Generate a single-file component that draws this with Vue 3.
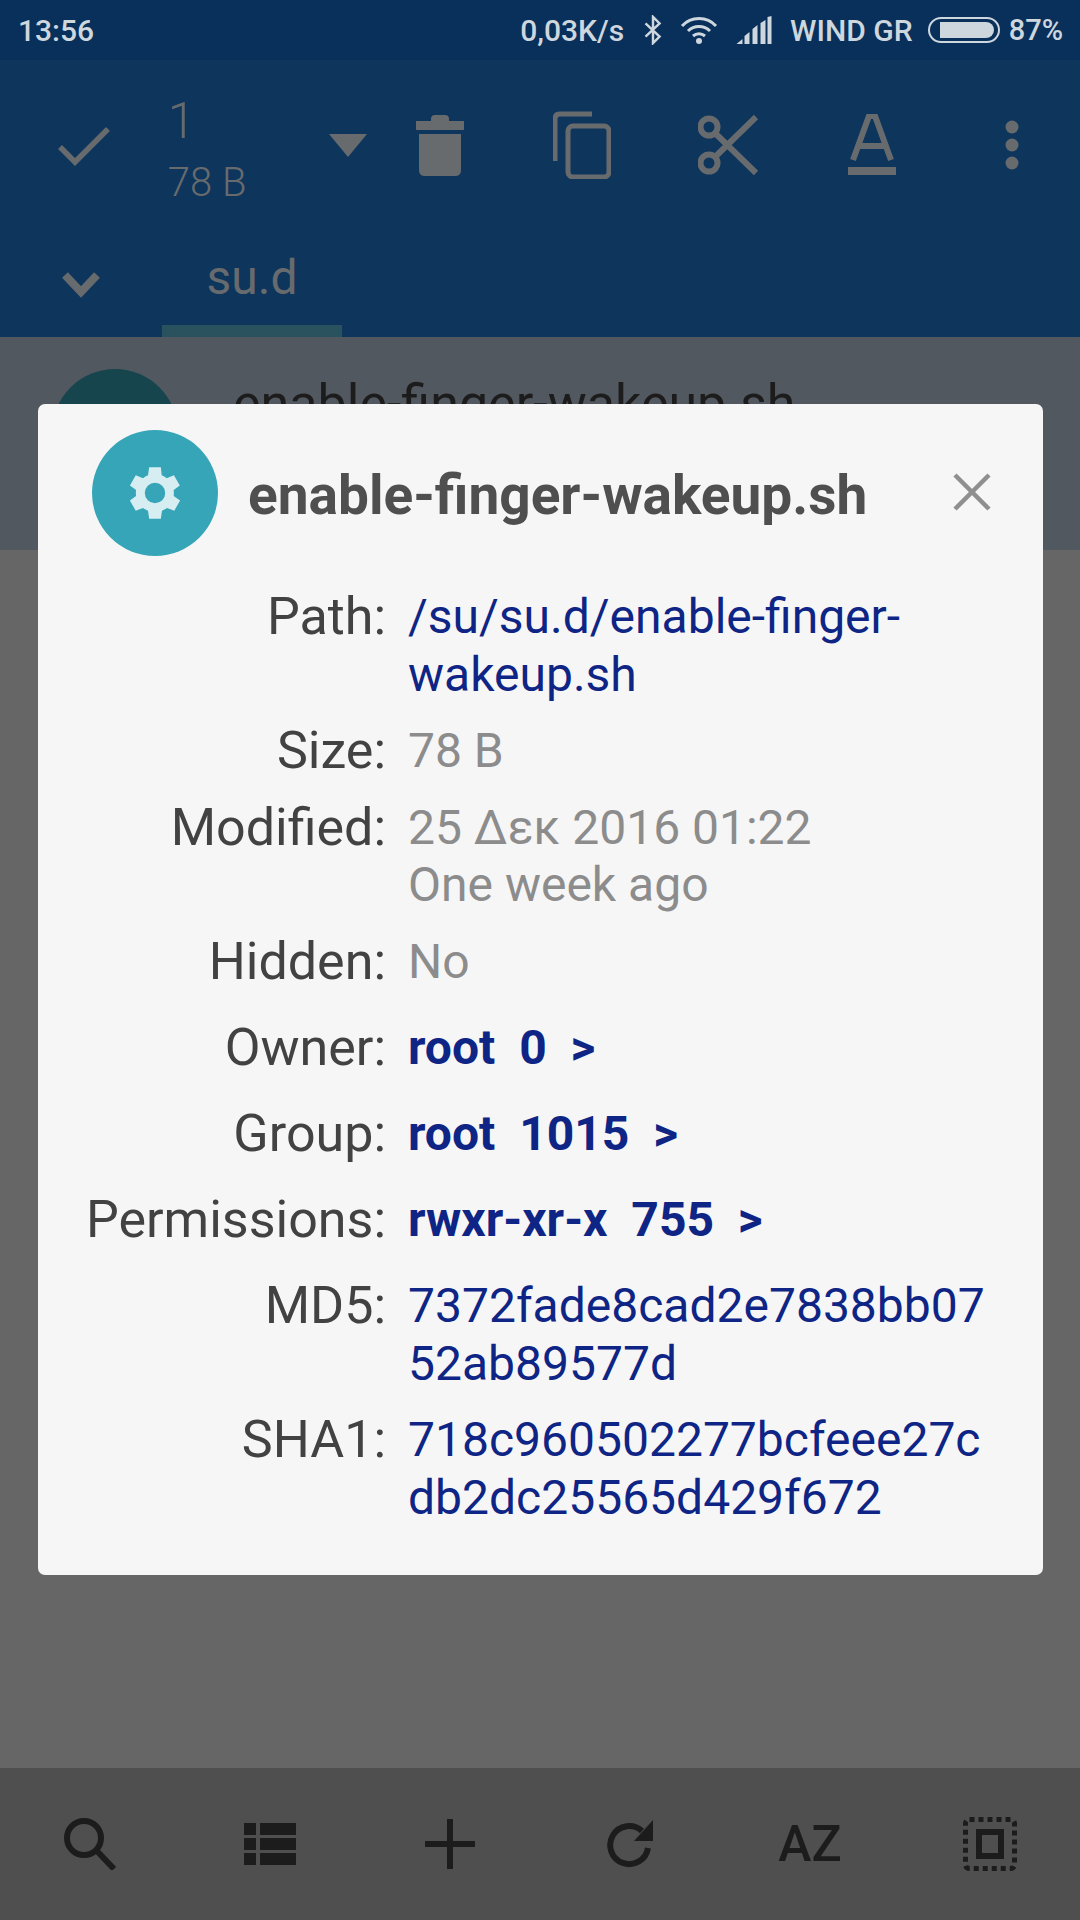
<template>
  <div class="screen">
    <!-- Status bar -->
    <div class="status">
      <span class="time">13:56</span>
      <div class="status-right">
        <span>0,03K/s</span>
        <svg class="st-bt" viewBox="0 0 20 32"><path d="M2 9l15 14-7 7V2l7 7L2 23" fill="none" stroke="#ced6de" stroke-width="2.600"/></svg>
        <svg class="st-wifi" viewBox="0 0 38 30"><path d="M2 11C11 1 27 1 36 11M8 16c6-6 16-6 22 0M13 21c3.500-3 8.500-3 12 0" fill="none" stroke="#ced6de" stroke-width="3"/><circle cx="19" cy="26" r="3" fill="#ced6de"/></svg>
        <svg class="st-sig" viewBox="0 0 36 28"><path d="M0 28l6-5v5zM8 28v-8l5-4v12zM16 28V13l5-4v19zM24 28V7l5-3v24zM31 28V1l4-1v28z" fill="#ced6de"/></svg>
        <span>WIND GR</span>
        <div class="battery"><div class="battery-fill"></div></div>
        <span class="pct">87%</span>
      </div>
    </div>

    <!-- Toolbar -->
    <div class="appbar">
      <div class="actions">
        <div class="slot-check">
          <svg width="54" height="42" viewBox="0 0 54 42"><path d="M3 22l15 15L51 4" fill="none" stroke="#686b6e" stroke-width="5.500"/></svg>
        </div>
        <div class="count">
          <div class="count-num">1</div>
          <div class="count-size">78 B</div>
        </div>
        <div class="slot-tri"><div class="tri"></div></div>
        <div class="slot">
          <svg width="48" height="62" viewBox="0 0 48 62"><path d="M15 5q0-4 4-4h10q4 0 4 4v2h15v9H0V7h15zM3 20h42v36q0 6-6 6H9q-6 0-6-6z" fill="#686b6e"/></svg>
        </div>
        <div class="slot">
          <svg width="58" height="68" viewBox="0 0 58 68"><path d="M2 50V8q0-5 5-5h32" fill="none" stroke="#686b6e" stroke-width="5"/><rect x="15" y="15" width="41" height="51" rx="5" fill="none" stroke="#686b6e" stroke-width="5"/></svg>
        </div>
        <div class="slot slot-scissors">
          <svg width="62" height="62" viewBox="0 0 62 62"><circle cx="11" cy="13" r="8.500" fill="none" stroke="#686b6e" stroke-width="6"/><circle cx="11" cy="49" r="8.500" fill="none" stroke="#686b6e" stroke-width="6"/><path d="M17 19l41 40M17 43L58 3" stroke="#686b6e" stroke-width="6" fill="none"/></svg>
        </div>
        <div class="slot slot-font">
          <svg width="48" height="62" viewBox="0 0 48 62"><path d="M5 46L21 2h6l16 44M11 32h26" fill="none" stroke="#686b6e" stroke-width="6"/><rect x="0" y="53" width="48" height="8" fill="#686b6e"/></svg>
        </div>
        <div class="slot slot-more">
          <svg width="14" height="50" viewBox="0 0 14 50"><circle cx="7" cy="7" r="6.500" fill="#686b6e"/><circle cx="7" cy="25" r="6.500" fill="#686b6e"/><circle cx="7" cy="43" r="6.500" fill="#686b6e"/></svg>
        </div>
      </div>
      <div class="tabs">
        <div class="slot-chevron">
          <svg width="40" height="28" viewBox="0 0 40 28"><path d="M4 4l16 17L36 4" fill="none" stroke="#686b6e" stroke-width="8"/></svg>
        </div>
        <div class="tab">su.d</div>
      </div>
    </div>

    <!-- List behind the dialog -->
    <div class="list-row">
      <div class="list-icon"></div>
      <div class="list-name">enable-finger-wakeup.sh</div>
    </div>
    <div class="empty"></div>

    <!-- Bottom bar -->
    <div class="bottom">
      <svg width="52" height="52" viewBox="0 0 52 52"><circle cx="20" cy="20" r="17" fill="none" stroke="#1c1c1c" stroke-width="6"/><path d="M32 32l18 19" stroke="#1c1c1c" stroke-width="6" fill="none"/></svg>
      <svg width="52" height="42" viewBox="0 0 52 42"><path d="M0 0h12v12H0zM16 0h36v12H16zM0 15h12v12H0zM16 15h36v12H16zM0 30h12v12H0zM16 30h36v12H16z" fill="#1c1c1c"/></svg>
      <svg width="50" height="50" viewBox="0 0 50 50"><path d="M0 22h50v6H0zM22 0h6v50h-6z" fill="#1c1c1c"/></svg>
      <svg width="48" height="48" viewBox="0 0 48 48"><path d="M42 28a19 19 0 1 1-6-17" fill="none" stroke="#1c1c1c" stroke-width="6"/><path d="M47 0v21H28z" fill="#1c1c1c"/></svg>
      <div class="az">AZ</div>
      <svg width="54" height="54" viewBox="0 0 54 54"><rect x="2.500" y="2.500" width="49" height="49" rx="4" fill="none" stroke="#1c1c1c" stroke-width="5" stroke-dasharray="5 4"/><rect x="16" y="15" width="22" height="24" fill="none" stroke="#1c1c1c" stroke-width="6"/></svg>
    </div>

    <!-- Properties dialog -->
    <div class="dialog">
      <div class="dialog-head">
        <div class="dialog-icon">
          <svg width="70" height="70" viewBox="0 0 24 24"><path fill="#d6eef2" fill-rule="evenodd" d="M19.400 13a7.500 7.500 0 0 0 0-2l2.100-1.600-2-3.500-2.500 1a7.500 7.500 0 0 0-1.700-1L15 3.200h-4l-.4 2.700a7.500 7.500 0 0 0-1.700 1l-2.500-1-2 3.500L6.500 11a7.500 7.500 0 0 0 0 2l-2.100 1.600 2 3.500 2.500-1a7.500 7.500 0 0 0 1.700 1l.4 2.700h4l.4-2.700a7.500 7.500 0 0 0 1.700-1l2.500 1 2-3.500zM13 15.500a3.500 3.500 0 1 1 0-7 3.500 3.500 0 0 1 0 7z" transform="translate(-1 0)"/></svg>
        </div>
        <div class="dialog-title">enable-finger-wakeup.sh</div>
        <svg class="close" width="38" height="38" viewBox="0 0 38 38"><path d="M2 2l34 34M36 2L2 36" stroke="#8f8f8f" stroke-width="4.500" fill="none"/></svg>
      </div>
      <div class="props">
        <template v-for="row in rows" :key="row.label">
          <div class="prop-label" :class="{ tall: row.kind === 'bold', spaced: row.spaced }">{{ row.label }}:</div>
          <div class="prop-value" :class="[row.kind, { spaced: row.spaced }]">
            <div v-for="line in row.lines" :key="line">{{ line }}</div>
          </div>
        </template>
      </div>
    </div>
  </div>
</template>

<script setup>
const rows = [
  { label: 'Path', kind: 'link', lines: ['/su/su.d/enable-finger-', 'wakeup.sh'] },
  { label: 'Size', kind: 'muted', lines: ['78 B'] },
  { label: 'Modified', kind: 'muted', lines: ['25 Δεκ 2016 01:22', 'One week ago'] },
  { label: 'Hidden', kind: 'muted', lines: ['No'] },
  { label: 'Owner', kind: 'bold', lines: ['root\u00a0\u00a00\u00a0\u00a0>'] },
  { label: 'Group', kind: 'bold', lines: ['root\u00a0\u00a01015\u00a0\u00a0>'] },
  { label: 'Permissions', kind: 'bold', lines: ['rwxr-xr-x\u00a0\u00a0755\u00a0\u00a0>'] },
  { label: 'MD5', kind: 'link', spaced: true, lines: ['7372fade8cad2e7838bb07', '52ab89577d'] },
  { label: 'SHA1', kind: 'link', lines: ['718c960502277bcfeee27c', 'db2dc25565d429f672'] }
]
</script>

<style>
body {
  margin: 0;
  background: #666;
}
</style>

<style scoped>
.screen {
  position: relative;
  width: 1080px;
  height: 1920px;
  overflow: hidden;
  display: flex;
  flex-direction: column;
  background: #666666;
  font-family: Roboto, "Noto Sans", sans-serif;
}

.status {
  height: 60px;
  flex: none;
  display: flex;
  align-items: center;
  justify-content: space-between;
  padding: 0 17px 0 18px;
  background: #08305a;
  color: #ced6de;
  font-size: 30px;
  font-weight: 500;
}

.status-right {
  display: flex;
  align-items: center;
}

.pct {
  font-size: 29px;
}

.st-bt {
  width: 20px;
  height: 30px;
  margin-left: 19px;
}

.st-wifi {
  width: 38px;
  height: 30px;
  margin-left: 17px;
}

.st-sig {
  width: 37px;
  height: 28px;
  margin-left: 18px;
  margin-right: 17px;
}

.battery {
  width: 72px;
  height: 26px;
  margin-left: 15px;
  margin-right: 9px;
  border: 2px solid #ced6de;
  border-radius: 13px;
  padding: 3px 4px 3px 10px;
  box-sizing: border-box;
}

.battery-fill {
  height: 100%;
  background: #ced6de;
  border-radius: 0 8px 8px 0;
}

.appbar {
  height: 277px;
  flex: none;
  background: #0e355c;
  color: #686b6e;
}

.actions {
  height: 170px;
  display: flex;
  align-items: center;
}

.slot-check {
  width: 170px;
  display: flex;
  justify-content: center;
  padding-top: 2px;
}

.count {
  width: 150px;
  margin-top: 6px;
}

.count-num {
  font-size: 50px;
  line-height: 60px;
  font-weight: 300;
  margin-bottom: 10px;
}

.count-size {
  font-size: 40px;
  line-height: 44px;
  font-weight: 300;
}

.slot-tri {
  width: 54px;
  display: flex;
  justify-content: center;
}

.tri {
  width: 0;
  height: 0;
  margin-left: 10px;
  border-left: 19px solid transparent;
  border-right: 19px solid transparent;
  border-top: 23px solid #686b6e;
}

.slot {
  width: 144px;
  display: flex;
  justify-content: center;
  align-items: center;
}

.slot-scissors svg {
  margin-left: 9px;
}

.slot-font svg {
  margin-left: 11px;
}

.slot-more svg {
  margin-left: 7px;
}

.tabs {
  height: 107px;
  display: flex;
}

.slot-chevron {
  width: 162px;
  display: flex;
  justify-content: center;
  align-items: center;
  padding-top: 2px;
  box-sizing: border-box;
}

.tab {
  width: 180px;
  height: 107px;
  box-sizing: border-box;
  border-bottom: 12px solid #2a525e;
  text-align: center;
  font-size: 48px;
  line-height: 96px;
}

.list-row {
  height: 213px;
  flex: none;
  background: #52585f;
  display: flex;
  align-items: flex-start;
  box-sizing: border-box;
  padding: 32px 0 0 52px;
}

.list-icon {
  width: 126px;
  height: 126px;
  border-radius: 50%;
  background: #17454d;
}

.list-name {
  margin-left: 55px;
  font-size: 52px;
  line-height: 70px;
  color: #1c1c1c;
}

.bottom {
  height: 152px;
  flex: none;
  background: #4f4f4f;
  display: grid;
  grid-template-columns: repeat(6, 180px);
  justify-items: center;
  align-items: center;
}

.empty {
  flex: 1;
  background: #666666;
}

.az {
  font-size: 50px;
  font-weight: 500;
  color: #1c1c1c;
}

.dialog {
  position: absolute;
  left: 38px;
  top: 404px;
  width: 1005px;
  height: 1171px;
  box-sizing: border-box;
  background: #f6f6f6;
  border-radius: 7px;
}

.dialog-head {
  position: relative;
  display: flex;
  align-items: center;
  padding: 26px 0 0 54px;
}

.dialog-icon {
  width: 126px;
  height: 126px;
  border-radius: 50%;
  background: #36a5b8;
  display: flex;
  align-items: center;
  justify-content: center;
}

.dialog-title {
  margin-left: 30px;
  padding-top: 4px;
  font-size: 55px;
  font-weight: 700;
  color: #4f4f4f;
}

.close {
  position: absolute;
  right: 52px;
  top: 69px;
}

.props {
  display: grid;
  grid-template-columns: 348px 1fr;
  column-gap: 22px;
  row-gap: 19px;
  margin-top: 32px;
  line-height: 57.500px;
}

.prop-label {
  text-align: right;
  color: #424242;
  font-size: 52px;
}

.prop-value {
  font-size: 48px;
}

.prop-label.tall,
.prop-value.bold {
  padding-top: 9.500px;
}

.prop-label.spaced,
.prop-value.spaced {
  padding-top: 10px;
}

.prop-value.link {
  color: #0f2585;
}

.prop-value.muted {
  color: #8c8c8c;
}

.prop-value.bold {
  color: #0f2585;
  font-weight: 700;
}
</style>
